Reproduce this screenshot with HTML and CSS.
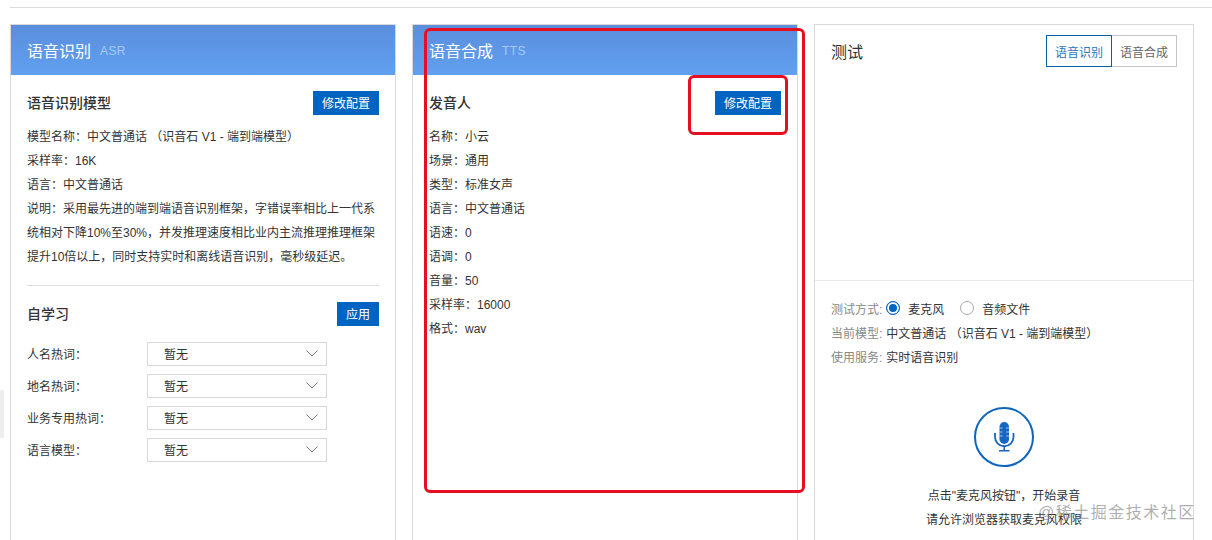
FILE: index.html
```html
<!DOCTYPE html>
<html lang="zh">
<head>
<meta charset="utf-8">
<title>语音</title>
<link rel="stylesheet" href="styles.css">
</head>
<body>
<div class="page">
  <div class="rule"></div>
  <div class="cards">
    <section class="card">
      <header class="banner"><h2>语音识别</h2><span>ASR</span></header>
      <div class="body">
        <div class="sec-head"><h3>语音识别模型</h3><button class="btn">修改配置</button></div>
        <div class="info">
          <p>模型名称：中文普通话 （识音石 V1 - 端到端模型）</p>
          <p>采样率：16K</p>
          <p>语言：中文普通话</p>
          <p>说明：采用最先进的端到端语音识别框架，字错误率相比上一代系统相对下降10%至30%，并发推理速度相比业内主流推理推理框架提升10倍以上，同时支持实时和离线语音识别，毫秒级延迟。</p>
        </div>
        <hr class="divider">
        <div class="sec-head learn"><h3>自学习</h3><button class="btn">应用</button></div>
        <div class="form">
          <label class="row"><span>人名热词：</span><div class="select">暂无<svg viewBox="0 0 12 7" width="12" height="7"><path d="M.5.500 6 6 11.500.500" fill="none" stroke="#777"/></svg></div></label>
          <label class="row"><span>地名热词：</span><div class="select">暂无<svg viewBox="0 0 12 7" width="12" height="7"><path d="M.5.500 6 6 11.500.500" fill="none" stroke="#777"/></svg></div></label>
          <label class="row"><span>业务专用热词：</span><div class="select">暂无<svg viewBox="0 0 12 7" width="12" height="7"><path d="M.5.500 6 6 11.500.500" fill="none" stroke="#777"/></svg></div></label>
          <label class="row"><span>语言模型：</span><div class="select">暂无<svg viewBox="0 0 12 7" width="12" height="7"><path d="M.5.500 6 6 11.500.500" fill="none" stroke="#777"/></svg></div></label>
        </div>
      </div>
    </section>
    <section class="card">
      <header class="banner"><h2>语音合成</h2><span>TTS</span></header>
      <div class="body">
        <div class="sec-head"><h3>发音人</h3><button class="btn">修改配置</button></div>
        <div class="info">
          <p>名称：小云</p>
          <p>场景：通用</p>
          <p>类型：标准女声</p>
          <p>语言：中文普通话</p>
          <p>语速：0</p>
          <p>语调：0</p>
          <p>音量：50</p>
          <p>采样率：16000</p>
          <p>格式：wav</p>
        </div>
      </div>
    </section>
    <section class="card test">
      <div class="test-top">
        <h2>测试</h2>
        <div class="tabs"><button class="tab active">语音识别</button><button class="tab">语音合成</button></div>
      </div>
      <div class="test-bottom">
        <div class="meta radios"><span class="key">测试方式:</span><i class="radio on"></i><span class="opt">麦克风</span><i class="radio"></i><span>音频文件</span></div>
        <div class="meta"><span class="key">当前模型:</span><span>中文普通话 （识音石 V1 - 端到端模型）</span></div>
        <div class="meta"><span class="key">使用服务:</span><span>实时语音识别</span></div>
        <div class="mic">
          <svg viewBox="0 0 60 60" width="60" height="60">
            <circle cx="30" cy="30" r="29" fill="none" stroke="#0d66bd" stroke-width="2"/>
            <rect x="25.500" y="15" width="9.500" height="22" rx="4.750" fill="#1766c4"/>
            <path d="M21 26v4a9.250 9.250 0 0 0 18.500 0v-4" fill="none" stroke="#1766c4" stroke-width="1.800"/>
            <path d="M30.250 39v4M25 43.700h10.500" fill="none" stroke="#1766c4" stroke-width="1.600"/>
            <path d="M25.500 21h3M32 21h3M25.500 25h3M32 25h3M25.500 29h3M32 29h3" stroke="#fff" stroke-width=".6"/>
          </svg>
        </div>
        <p class="hint">点击"麦克风按钮"，开始录音</p>
        <p class="hint">请允许浏览器获取麦克风权限</p>
      </div>
    </section>
  </div>
  <div class="side-tab"></div>
  <div class="mark mark-big"></div>
  <div class="mark mark-small"></div>
  <div class="watermark">@稀土掘金技术社区</div>
</div>
</body>
</html>
```
FILE: styles.css
```css
* { box-sizing: border-box; }
html, body { margin: 0; height: 100%; overflow: hidden; background: #fff; }
body { font-family: "Liberation Sans", "Noto Sans CJK SC", sans-serif; font-size: 12px; color: #333; }
.page { position: relative; width: 1212px; height: 540px; overflow: hidden; padding: 7px 0 0 10px; }
.rule { height: 1px; background: #ddd; margin-bottom: 16px; }
.cards { display: flex; gap: 16px; height: 540px; }
.card { width: 386px; flex: none; border: 1px solid #d9d9d9; border-bottom: 0; background: #fff; }
.card.test { width: 380px; }
.banner { height: 50px; display: flex; align-items: center; gap: 9px; padding: 0 16px; background: linear-gradient(180deg, #5b8edd, #60a0f0); }
.banner h2 { margin: 0; font-size: 16px; font-weight: 400; color: #fff; }
.banner span { font-size: 12px; color: #a9c9f5; padding-top: 2px; letter-spacing: .4px; }
.body { padding: 16px 16px 0; }
.sec-head { display: flex; justify-content: space-between; align-items: center; height: 24px; }
.sec-head h3 { margin: 0 0 2px; font-size: 14px; font-weight: 500; color: #333; }
.btn { height: 24px; padding: 0 9px 2px; border: 0; background: #0064c0; color: #fff; font: inherit; letter-spacing: 0; }
.info { margin-top: 10px; }
.info p { margin: 0; line-height: 24px; }
.divider { margin: 16px 0 0; border: 0; border-top: 1px solid #ddd; }
.learn { margin-top: 16px; }
.form { margin-top: 16px; display: flex; flex-direction: column; gap: 8px; }
.row { display: flex; align-items: center; height: 24px; }
.row > span { width: 120px; flex: none; padding-bottom: 2px; }
.select { width: 180px; height: 24px; border: 1px solid #d9d9d9; display: flex; align-items: center; justify-content: space-between; padding: 0 8px 2px 16px; }
.test-top { height: 256px; padding: 10px 16px 0; display: flex; justify-content: space-between; align-items: flex-start; border-bottom: 1px solid #e8e8e8; }
.test-top h2 { margin: 2px 0 0; font-size: 16px; font-weight: 400; line-height: 32px; }
.tabs { display: flex; }
.tab { width: 65px; height: 32px; padding: 0; border: 1px solid #c4c4c4; border-left: 0; background: #fff; color: #666; font: inherit; }
.tab.active { width: 66px; border: 1px solid #0a5f9e; color: #2a78bd; }
.test-bottom { padding: 15px 16px 0; }
.meta { display: flex; align-items: center; height: 24px; gap: 4px; }
.key { color: #888; }
.radio { width: 14px; height: 14px; border-radius: 50%; border: 1px solid #aaa; margin: 0 4px 0 0; background: #fff; }
.radio.on { border-color: #0064c0; box-shadow: inset 0 0 0 2px #fff; background: #0064c0; }
.opt { margin-right: 12px; }
.mic { display: flex; justify-content: center; margin-top: 39px; height: 60px; }
.hint { margin: 0; line-height: 24px; text-align: center; }
.mic + .hint { margin-top: 17px; }
.side-tab { position: absolute; left: 0; top: 390px; width: 4px; height: 48px; background: #eee; }
.mark { position: absolute; border: 3px solid #e60f22; }
.mark-big { left: 424px; top: 28px; width: 381px; height: 465px; border-radius: 6px; }
.mark-small { left: 688px; top: 75px; width: 100px; height: 60px; border-radius: 6px; }
.watermark { position: absolute; left: 1038px; top: 503px; font-size: 16px; line-height: 20px; color: rgba(120,120,120,.6); letter-spacing: 1.500px; white-space: nowrap; }
```
